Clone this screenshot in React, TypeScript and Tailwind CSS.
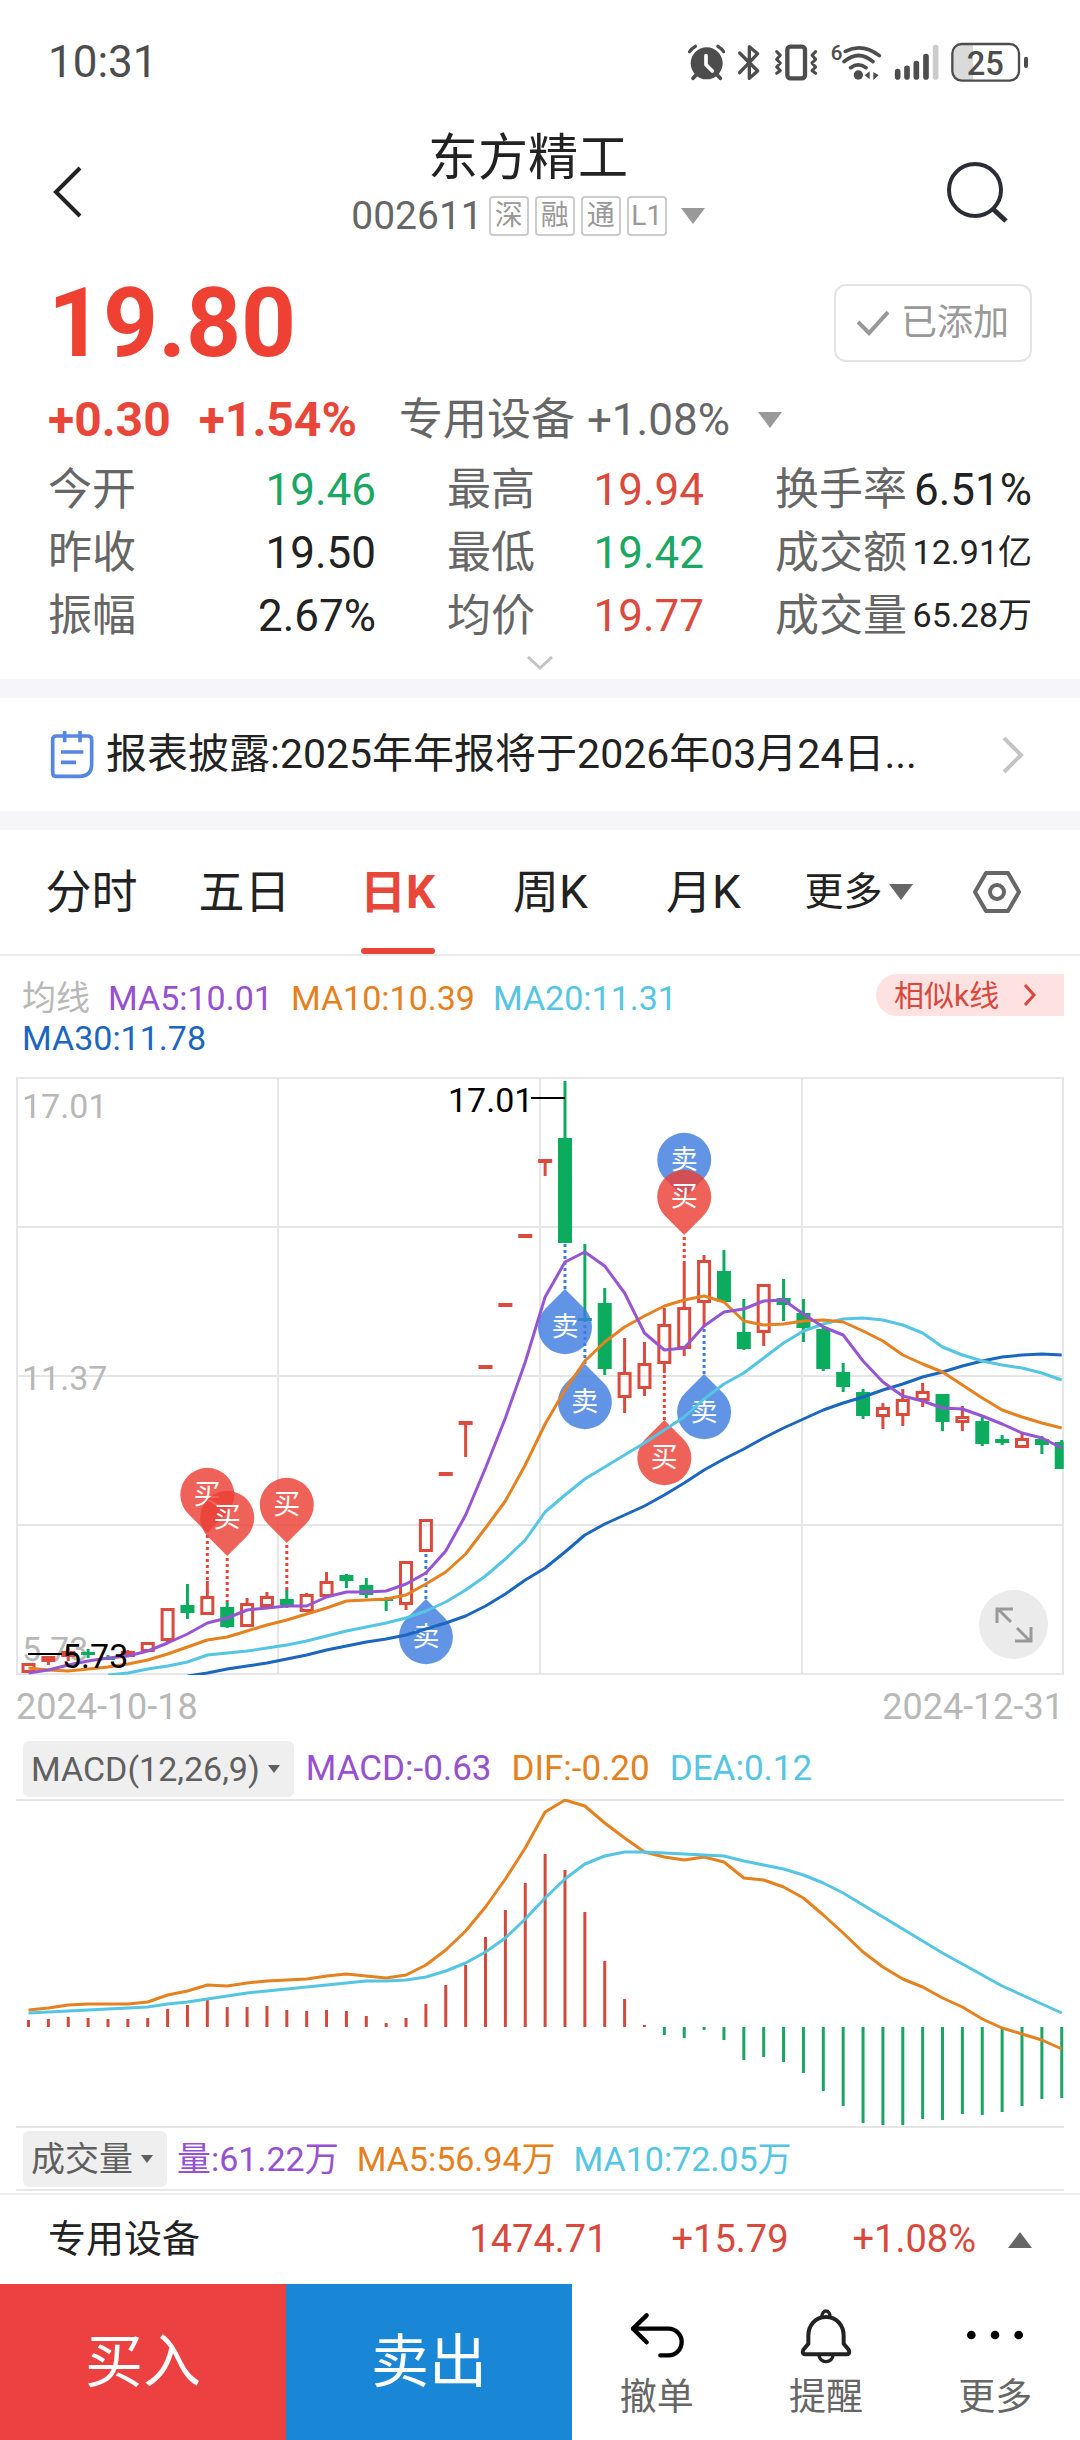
import { useState } from "react";
import type { ReactNode } from "react";

type Candle = [high: number, top: number, bottom: number, low: number, up: boolean];

// one entry per trading day, y measured down from the top grid line
const candles: Candle[] = [
  [585, 585, 595, 595, true],
  [578, 578, 584, 587, true],
  [570, 573, 579, 583, true],
  [571, 574, 577, 580, false],
  [577, 579, 582, 582, false],
  [572, 573, 579, 579, true],
  [564, 564, 574, 574, true],
  [530, 530, 563, 564, true],
  [506, 527, 535, 541, false],
  [503, 518, 537, 537, true],
  [524, 529, 549, 550, false],
  [520, 525, 549, 549, true],
  [514, 518, 529, 529, true],
  [512, 521, 527, 530, false],
  [515, 516, 534, 534, true],
  [494, 503, 519, 519, true],
  [496, 497, 503, 510, false],
  [500, 507, 517, 520, false],
  [519, 521, 523, 533, false],
  [483, 483, 527, 532, true],
  [441, 441, 474, 474, true],
  [394, 394, 398, 398, true],
  [343, 343, 347, 379, true],
  [287, 287, 291, 291, true],
  [225, 225, 229, 229, true],
  [156, 156, 160, 160, true],
  [81, 81, 85, 98, true],
  [3, 60, 165, 165, false],
  [166, 240, 243, 243, false],
  [210, 225, 291, 297, false],
  [260, 294, 320, 335, true],
  [264, 285, 311, 318, true],
  [230, 246, 286, 295, true],
  [185, 229, 271, 278, true],
  [177, 182, 225, 249, true],
  [172, 193, 224, 224, false],
  [221, 254, 271, 272, false],
  [206, 206, 255, 268, true],
  [201, 220, 227, 243, false],
  [221, 235, 250, 264, false],
  [250, 251, 291, 293, false],
  [285, 294, 309, 314, false],
  [311, 314, 338, 341, false],
  [325, 329, 339, 351, true],
  [311, 321, 338, 348, true],
  [305, 313, 323, 329, true],
  [316, 316, 344, 353, false],
  [328, 338, 345, 353, true],
  [339, 343, 366, 368, false],
  [357, 361, 365, 367, false],
  [354, 360, 370, 370, true],
  [358, 361, 367, 376, false],
  [362, 364, 391, 391, false],
];

const ma5 = [595, 592, 587, 583, 580, 578, 573, 565, 556, 545, 540, 532, 530, 528, 528, 519, 514, 514, 513, 506, 495, 473, 437, 390, 340, 284, 219, 184, 174, 188, 215, 255, 272, 270, 248, 234, 231, 223, 222, 236, 249, 257, 283, 304, 318, 323, 330, 331, 338, 346, 355, 360, 370];
const ma10 = [590, 592, 593, 591, 589, 586, 582, 576, 569, 562, 559, 553, 547, 542, 536, 530, 523, 522, 521, 517, 506, 494, 476, 450, 423, 387, 346, 312, 283, 264, 249, 238, 228, 222, 218, 224, 243, 247, 246, 243, 242, 244, 253, 263, 277, 286, 294, 307, 320, 332, 339, 345, 350];
const ma20 = [597, 595, 591, 588, 584, 577, 575, 573, 570, 567, 563, 558, 553, 549, 545, 540, 533, 524, 512, 498, 481, 462, 434, 417, 401, 389, 377, 365, 352, 339, 321, 306, 295, 280, 265, 253, 246, 241, 240, 242, 247, 255, 269, 277, 283, 287, 290, 295, 302];
const ma30 = [598, 595, 591, 588, 585, 581, 577, 572, 568, 564, 561, 557, 551, 545, 538, 528, 516, 502, 490, 474, 457, 446, 437, 428, 417, 405, 392, 381, 371, 360, 350, 341, 332, 325, 319, 312, 306, 299, 294, 288, 283, 279, 277, 276, 277];

const macdBars = [7, 8, 10, 9, 8, 8, 9, 18, 22, 27, 20, 20, 21, 17, 16, 17, 16, 11, 4, 9, 23, 42, 62, 90, 117, 144, 173, 157, 115, 66, 28, 2, -8, -11, -3, -13, -33, -30, -35, -46, -64, -79, -96, -98, -98, -92, -93, -87, -88, -85, -79, -72, -71];
const dif = [210, 208, 205, 204, 204, 204, 202, 195, 191, 185, 186, 183, 181, 180, 179, 176, 174, 176, 178, 175, 165, 150, 131, 107, 79, 48, 12, 0, 6, 23, 38, 52, 57, 60, 57, 62, 78, 80, 87, 98, 115, 133, 152, 167, 179, 187, 198, 207, 219, 228, 234, 240, 249];
const dea = [213, 212, 211, 210, 209, 208, 207, 204, 202, 199, 196, 193, 191, 189, 187, 185, 183, 181, 181, 180, 177, 171, 163, 152, 138, 119, 98, 79, 64, 56, 52, 52, 53, 54, 55, 56, 61, 65, 69, 75, 83, 93, 105, 117, 129, 141, 153, 164, 175, 186, 195, 204, 213];

// trade marks: day index, centre of the balloon, where the dotted line meets the candle
const pins = [
  { day: 9, y: 417, to: 503, side: "buy" },
  { day: 10, y: 440, to: 524, side: "buy" },
  { day: 13, y: 427, to: 512, side: "buy" },
  { day: 20, y: 559, to: 474, side: "sell" },
  { day: 27, y: 249, to: 165, side: "sell" },
  { day: 28, y: 324, to: 243, side: "sell" },
  { day: 32, y: 380, to: 295, side: "buy" },
  { day: 33, y: 82, to: 120, side: "sell" },
  { day: 33, y: 119, to: 185, side: "buy" },
  { day: 34, y: 334, to: 249, side: "sell" },
];

const stats = [
  { label: "今开", value: "19.46", color: "text-[#1aa763]" },
  { label: "最高", value: "19.94", color: "text-[#dc4a3d]" },
  { label: "换手率", value: "6.51%", color: "text-[#222222]" },
  { label: "昨收", value: "19.50", color: "text-[#222222]" },
  { label: "最低", value: "19.42", color: "text-[#1aa763]" },
  { label: "成交额", value: "12.91亿", color: "text-[#222222]", small: true },
  { label: "振幅", value: "2.67%", color: "text-[#222222]" },
  { label: "均价", value: "19.77", color: "text-[#dc4a3d]" },
  { label: "成交量", value: "65.28万", color: "text-[#222222]", small: true },
];

const tabs = ["分时", "五日", "日K", "周K", "月K"];

const dayX = (i: number) => 12.5 + i * 19.87;

const linePoints = (values: number[], start = 0) =>
  values.map((y, i) => `${dayX(i + start)},${y}`).join(" ");

function Caret({ className, up = false }: { className: string; up?: boolean }) {
  return (
    <svg viewBox="0 0 24 16" className={className} fill="currentColor" aria-hidden="true">
      <path d={up ? "M12 0L24 16H0z" : "M0 0h24L12 16z"} />
    </svg>
  );
}

function StatusIcons() {
  return (
    <div className="flex items-center gap-3 text-[#4d4d4d]">
      {/* Alarm */}
      <svg viewBox="52 60 114 120" className="h-10 w-[38px]" fill="none" stroke="currentColor" strokeLinecap="round">
        <circle cx="111" cy="124" r="48" fill="currentColor" stroke="none" />
        <path d="M60 89q7-10 17-16M162 89q-7-10-17-16" strokeWidth="10" />
        <path d="M80 158l-10 11M142 158l10 11" strokeWidth="11" />
        <path d="M109 101v27l19 19" stroke="#fff" strokeWidth="11" strokeLinejoin="round" />
      </svg>
      {/* Bluetooth */}
      <svg viewBox="203 60 72 120" className="h-10 w-6" fill="none" stroke="currentColor" strokeWidth="10" strokeLinecap="round" strokeLinejoin="round">
        <path d="M211 93l54 54-25 22V74l25 21-54 57" />
      </svg>
      {/* Vibrate */}
      <svg viewBox="305 60 138 120" className="h-10 w-[46px]" fill="none" stroke="currentColor" strokeLinecap="round" strokeLinejoin="round">
        <rect x="348" y="74" width="53" height="95" rx="9" strokeWidth="13" />
        <path d="M316 89l11 11-11 12 11 11-11 12 11 11-11 8M433 89l-11 11 11 12-11 11 11 12-11 11 11 8" strokeWidth="9" />
      </svg>
      {/* Wi-Fi 6 */}
      <svg viewBox="470 60 153 120" className="h-10 w-[51px]" fill="none" stroke="currentColor" strokeWidth="11" strokeLinecap="round">
        <text x="469" y="114" fontSize="62" fontWeight="500" fill="currentColor" stroke="none">6</text>
        <path d="M513 88q51-26 102 13M509 119q44-37 87 0M529 137q23-17 46 0" />
        <circle cx="552" cy="159" r="14" fill="currentColor" stroke="none" />
        <path d="M586 148v24l-15-12zM597 150l16 10-16 14z" fill="currentColor" stroke="none" />
      </svg>
      {/* Signal */}
      <svg viewBox="672 60 135 120" className="h-10 w-[45px]" fill="none" stroke="currentColor" strokeWidth="17" strokeLinecap="round">
        <path d="M683 149v16M711 139v26M739 125v40M768 104v61" />
        <path d="M797 77v88" stroke="#cbcbcb" />
      </svg>
      {/* Battery */}
      <svg viewBox="843 60 234 120" className="h-10 w-[78px]" fill="none" stroke="currentColor">
        <path d="M875 66h34v108h-34q-28 0-28-28V94q0-28 28-28z" fill="#dadada" stroke="none" />
        <rect x="847" y="66" width="200" height="110" rx="28" strokeWidth="7" />
        <path d="M1068 110v22" strokeWidth="12" strokeLinecap="round" />
        <text x="946" y="158" textAnchor="middle" fontSize="98" fontWeight="500" fill="currentColor" stroke="none">25</text>
      </svg>
    </div>
  );
}

function Pin({ day, y, to, side }: { day: number; y: number; to: number; side: string }) {
  const color = side === "buy" ? "#ec4035" : "#3f7ce0";
  const down = to > y;
  return (
    <g transform={`translate(${dayX(day)} ${y})`}>
      <line y1={down ? 40 : -38} y2={to - y} stroke={color} strokeWidth="3" strokeDasharray="3 3" />
      <path
        d={down ? "M0 38L-19 19A27 27 0 1 1 19 19Z" : "M0-38L19-19A27 27 0 1 1-19-19Z"}
        fill={color}
        fillOpacity="0.82"
      />
      <text y="9" textAnchor="middle" fontSize="27" fill="#ffffff">{side === "buy" ? "买" : "卖"}</text>
    </g>
  );
}

function KLineChart() {
  return (
    <svg viewBox="0 -1 1048 598" className="block w-full" role="img" aria-label="日K">
      <g stroke="#e6e6e6" strokeWidth="2" fill="none">
        <rect x="1" y="0" width="1046" height="596" />
        <path d="M1 149H1047M1 298H1047M1 447H1047M262 0V596M524 0V596M786 0V596" />
      </g>
      <g fontSize="34" fill="#b8b8b8">
        <text x="6" y="40">17.01</text>
        <text x="6" y="312">11.37</text>
        <text x="6" y="583">5.73</text>
      </g>

      {candles.map(([high, top, bottom, low, up], i) => {
        const x = dayX(i);
        const color = up ? "#dc4a3d" : "#0cac5f";
        const hollow = up && bottom - top > 5;
        return (
          <g key={i} stroke={color}>
            {high < top && <line x1={x} x2={x} y1={high} y2={top} strokeWidth="3" />}
            {low > bottom && <line x1={x} x2={x} y1={bottom} y2={low} strokeWidth="3" />}
            {hollow ? (
              <rect x={x - 5.5} y={top + 1.5} width="11" height={bottom - top - 3} fill="none" strokeWidth="3" />
            ) : (
              <rect x={x - 7} y={top} width={i === candles.length - 1 ? 9 : 14} height={bottom - top} fill={color} stroke="none" />
            )}
          </g>
        );
      })}

      {pins.map((pin, i) => (
        <Pin key={i} {...pin} />
      ))}

      <g fill="none" strokeWidth="3" strokeLinejoin="round">
        <polyline points={linePoints(ma30, 8)} stroke="#1b66be" />
        <polyline points={linePoints(ma20, 4)} stroke="#55c5e4" />
        <polyline points={linePoints(ma10)} stroke="#e5811f" />
        <polyline points={linePoints(ma5)} stroke="#9655d3" />
      </g>

      <g fontSize="34" fill="#000000" stroke="none">
        <text x="432" y="34">17.01</text>
        <text x="46" y="590">5.73</text>
      </g>
      <path d="M515 20H549M12 576H46" stroke="#000000" strokeWidth="2" />
    </svg>
  );
}

function MacdChart() {
  return (
    <svg viewBox="0 -1 1048 330" className="block w-full" role="img" aria-label="MACD">
      <path d="M0 0H1048M0 327H1048" stroke="#e6e6e6" strokeWidth="2" />
      {macdBars.map((v, i) => (
        <line
          key={i}
          x1={dayX(i)}
          x2={dayX(i)}
          y1="227"
          y2={227 - v}
          stroke={v > 0 ? "#d24a3e" : "#1ba565"}
          strokeWidth="3"
        />
      ))}
      <g fill="none" strokeWidth="3" strokeLinejoin="round">
        <polyline points={linePoints(dif)} stroke="#e5811f" />
        <polyline points={linePoints(dea)} stroke="#55c5e4" />
      </g>
    </svg>
  );
}

function IndicatorButton({ children }: { children: ReactNode }) {
  return (
    <button className="-mr-2 flex h-14 items-center gap-2 rounded-md bg-[#efefef] pl-2 pr-3.5 text-[34px] text-[#5f5f5f]">
      {children}
      <Caret className="h-2.5 w-3" />
    </button>
  );
}

export default function App() {
  const [activeTab, setActiveTab] = useState("日K");

  return (
    <div className="min-h-screen bg-white font-[Roboto,'Noto_Sans_CJK_SC',sans-serif] text-[#222222]">
      {/* Status bar */}
      <div className="flex h-[124px] items-center justify-between pl-12 pr-[51px]">
        <span className="text-[44px] text-[#4d4d4d]">10:31</span>
        <StatusIcons />
      </div>

      {/* Header */}
      <header className="flex items-center justify-between px-12 pt-1">
        <button aria-label="返回" className="w-20 pt-5">
          <svg viewBox="0 0 40 56" className="h-14 w-10" fill="none" stroke="#222222" strokeWidth="4">
            <path d="M32 4L8 28l24 24" />
          </svg>
        </button>
        <div className="flex flex-col items-center gap-2">
          <h1 className="text-[50px] leading-[60px]">东方精工</h1>
          <div className="flex items-center gap-1.5 text-[#666666]">
            <span className="text-[39px] leading-10">002611</span>
            {["深", "融", "通", "L1"].map((tag) => (
              <span key={tag} className="flex size-10 items-center justify-center rounded-sm border-2 border-[#cccccc] text-[28px] text-[#999999]">
                {tag}
              </span>
            ))}
            <button aria-label="切换股票" className="pl-2 text-[#999999]">
              <Caret className="h-4 w-6" />
            </button>
          </div>
        </div>
        <button aria-label="搜索" className="flex w-[104px] justify-end pr-6 pt-5">
          <svg viewBox="0 0 62 62" className="size-[62px]" fill="none" stroke="#2a2d35" strokeWidth="4">
            <circle cx="29" cy="29" r="26" />
            <path d="M47 48l13 12" strokeWidth="5" />
          </svg>
        </button>
      </header>

      {/* Quote */}
      <section className="px-12 pt-12">
        <div className="flex h-[78px] items-center justify-between">
          <span className="text-[96px] font-bold text-[#ee4134]">19.80</span>
          <button className="flex h-[78px] w-[198px] items-center justify-center gap-3 rounded-xl border-2 border-[#e4e4e4] text-[36px] text-[#999999]">
            <svg viewBox="0 0 32 26" className="h-[26px] w-8" fill="none" stroke="currentColor" strokeWidth="4">
              <path d="M1 12l11 11L31 2" />
            </svg>
            已添加
          </button>
        </div>
        <div className="mt-7 flex h-[60px] items-center text-[44px] text-[#666666]">
          <span className="text-[48px] font-bold text-[#e9463a]">+0.30</span>
          <span className="ml-7 text-[48px] font-bold text-[#e9463a]">+1.54%</span>
          <span className="ml-[42px]">专用设备</span>
          <span className="ml-3">+1.08%</span>
          <button aria-label="切换板块" className="ml-7 text-[#999999]">
            <Caret className="h-4 w-6" />
          </button>
        </div>
        <dl className="mt-2 grid grid-cols-[328fr_257fr_257fr] gap-x-[71px]">
          {stats.map((stat) => (
            <div key={stat.label} className="flex h-[63px] items-center justify-between whitespace-nowrap">
              <dt className="text-[44px] text-[#666666]">{stat.label}</dt>
              <dd className={`${stat.small ? "text-[34px]" : "text-[44px]"} ${stat.color}`}>{stat.value}</dd>
            </div>
          ))}
        </dl>
        <button aria-label="展开" className="flex h-8 w-full items-center justify-center">
          <svg viewBox="0 0 26 14" className="h-3.5 w-[26px]" fill="none" stroke="#c4c4c4" strokeWidth="3">
            <path d="M1 1l12 11L25 1" />
          </svg>
        </button>
      </section>

      {/* Notice */}
      <a href="#notice" className="flex h-[151px] items-center border-y-[19px] border-[#f6f6f8] pl-[50px] pr-14">
        <svg viewBox="150 115 132 147" className="mr-3 h-[49px] w-11 shrink-0" fill="none" stroke="#5686e4" strokeWidth="11">
          <path d="M169 133h95q11 0 11 11v73q0 37-37 37h-69q-11 0-11-11v-99q0-11 11-11z" strokeLinejoin="round" />
          <path d="M194 118v34M240 118v34M183 181h67M183 212h45" />
        </svg>
        <span className="flex-1 truncate text-[41px]">报表披露:2025年年报将于2026年03月24日...</span>
        <svg viewBox="0 0 22 38" className="h-[38px] w-[22px] shrink-0" fill="none" stroke="#c4c4c4" strokeWidth="4">
          <path d="M2 2l17 17L2 36" />
        </svg>
      </a>

      {/* Period tabs */}
      <nav className="grid h-[126px] grid-cols-[repeat(5,153fr)_157fr_120fr] border-b-2 border-[#ececec] pl-[15px] pr-[23px]">
        {tabs.map((tab) => (
          <button
            key={tab}
            onClick={() => setActiveTab(tab)}
            className={`relative text-[46px] ${activeTab === tab ? "font-bold text-[#e9463a]" : "text-[#222222]"}`}
          >
            {tab}
            {activeTab === tab && (
              <span className="absolute bottom-0 left-1/2 h-1.5 w-[74px] -translate-x-1/2 rounded-full bg-[#e64538]" />
            )}
          </button>
        ))}
        <button className="flex items-center justify-center gap-1.5 text-[39px]">
          更多
          <Caret className="h-4 w-6 text-[#666666]" />
        </button>
        <button aria-label="设置" className="flex items-center justify-center">
          <svg viewBox="0 0 48 42" className="h-[42px] w-12" fill="none" stroke="#666666" strokeWidth="4" strokeLinejoin="round">
            <path d="M13 2h22l11 19-11 19H13L2 21z" />
            <circle cx="24" cy="21" r="7" />
          </svg>
        </button>
      </nav>

      {/* K-line */}
      <section className="px-4">
        <div className="flex items-start justify-between pb-[19px] pt-[18px]">
          <div className="flex flex-wrap gap-x-[18px] pl-1.5 pt-1 text-[34px] leading-10">
            <span className="text-[#b8b8b8]">均线</span>
            <span className="text-[#9650d0]">MA5:10.01</span>
            <span className="text-[#e5801c]">MA10:10.39</span>
            <span className="text-[#55c5e4]">MA20:11.31</span>
            <span className="basis-full text-[#1b66be]">MA30:11.78</span>
          </div>
          <button className="flex h-[42px] w-[188px] shrink-0 items-center justify-between rounded-l-full bg-[#fde2e1] pl-[18px] pr-7 text-[30px] text-[#d9483c]">
            相似k线
            <svg viewBox="0 0 12 22" className="h-[22px] w-3" fill="none" stroke="currentColor" strokeWidth="3">
              <path d="M1 1l9 10-9 10" />
            </svg>
          </button>
        </div>
        <div className="relative">
          <KLineChart />
          <button aria-label="全屏" className="absolute bottom-4 right-4 flex size-[69px] items-center justify-center rounded-full bg-[#ebebeb]">
            <svg viewBox="0 0 38 38" className="size-[38px]" fill="none" stroke="#999999" strokeWidth="3">
              <path d="M2 17V3h16M3 3l13 13M36 21v14H20M35 35L22 22" />
            </svg>
          </button>
        </div>
        <div className="mt-3 flex justify-between text-[36px] leading-10 text-[#b8b8b8]">
          <span>2024-10-18</span>
          <span>2024-12-31</span>
        </div>
      </section>

      {/* MACD */}
      <section className="px-4">
        <div className="mt-3.5 flex items-center gap-5 pb-0.5 pl-[7px] text-[35px]">
          <IndicatorButton>MACD(12,26,9)</IndicatorButton>
          <span className="text-[#9650d0]">MACD:-0.63</span>
          <span className="text-[#e5801c]">DIF:-0.20</span>
          <span className="text-[#55c5e4]">DEA:0.12</span>
        </div>
        <MacdChart />
      </section>

      {/* Volume */}
      <section className="px-4 pb-0.5">
        <div className="flex items-center gap-[18px] border-b-2 border-[#e6e6e6] pb-0.5 pl-[7px] pt-0.5 text-[34px]">
          <IndicatorButton>成交量</IndicatorButton>
          <span className="text-[#9650d0]">量:61.22万</span>
          <span className="text-[#e5801c]">MA5:56.94万</span>
          <span className="text-[#55c5e4]">MA10:72.05万</span>
        </div>
      </section>

      {/* Sector quote */}
      <div className="flex h-[91px] items-center border-t-2 border-[#ececec] px-12 text-[38px] text-[#d9483c]">
        <span className="flex-1 text-[#222222]">专用设备</span>
        <span>1474.71</span>
        <span className="ml-16">+15.79</span>
        <span className="ml-16">+1.08%</span>
        <button aria-label="展开板块" className="ml-8 text-[#666666]">
          <Caret up className="h-4 w-6" />
        </button>
      </div>

      {/* Trade bar */}
      <footer className="grid h-[156px] grid-cols-[286fr_286fr_508fr]">
        <button className="bg-[#ed4141] text-[58px] text-white">买入</button>
        <button className="bg-[#1a86d6] text-[58px] text-white">卖出</button>
        <div className="grid grid-cols-3 text-[37px] leading-10 text-[#666666]">
          <button className="flex flex-col items-center justify-center gap-3.5">
            <svg viewBox="84 45 168 174" className="h-[58px] w-14" fill="none" stroke="#000000" strokeWidth="13" strokeLinecap="round" strokeLinejoin="round">
              <path d="M137 73L96 113l41 41M96 113h106a40 40 0 0 1 0 80h-24" />
            </svg>
            撤单
          </button>
          <button className="flex flex-col items-center justify-center gap-3.5">
            <svg viewBox="589 45 168 174" className="h-[58px] w-14" fill="none" stroke="#222222" strokeWidth="12" strokeLinecap="round" strokeLinejoin="round">
              <path d="M673 78c-33 0-53 26-53 56v24l-15 18q-6 14 8 14h120q14 0 8-14l-15-18v-24c0-30-20-56-53-56z" />
              <path d="M661 76a12 16 0 0 1 24 0M652 193a21 19 0 0 0 42 0" strokeWidth="10" />
            </svg>
            提醒
          </button>
          <button className="flex flex-col items-center justify-center gap-3.5">
            <svg viewBox="1099 45 168 174" className="h-[58px] w-14" fill="#000000">
              <circle cx="1112" cy="132" r="13" />
              <circle cx="1183" cy="132" r="13" />
              <circle cx="1254" cy="132" r="13" />
            </svg>
            更多
          </button>
        </div>
      </footer>
    </div>
  );
}
